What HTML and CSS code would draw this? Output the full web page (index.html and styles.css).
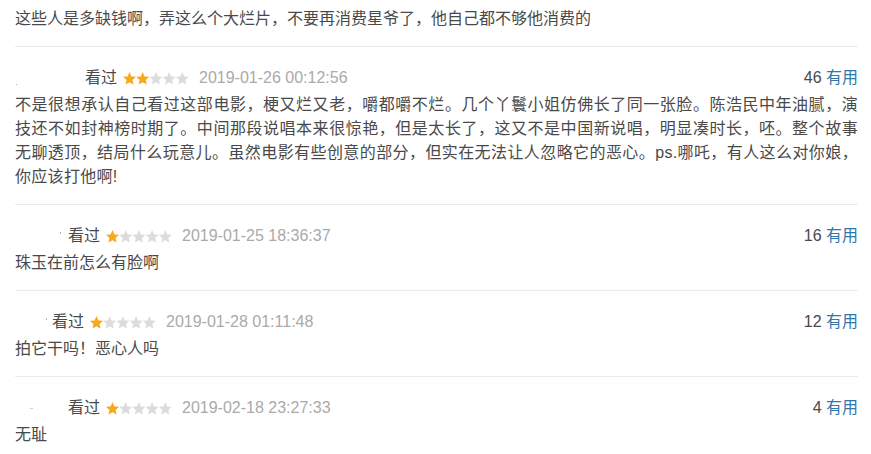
FILE: index.html
```html
<!DOCTYPE html>
<html lang="zh-CN">
<head>
<meta charset="utf-8">
<title>短评</title>
<link rel="stylesheet" href="styles.css">
</head>
<body>
<div class="list">
  <div class="item first">
    <p class="text">这些人是多缺钱啊，弄这么个大烂片，不要再消费星爷了，他自己都不够他消费的</p>
  </div>

  <div class="item">
    <div class="head">
      <span class="user u1"><i class="dot d1"></i></span>
      <span class="status">看过</span>
      <span class="stars">
        <svg viewBox="0 0 66 13" width="66" height="13"><use href="#s" x="0" class="on"/><use href="#s" x="13.2" class="on"/><use href="#s" x="26.4"/><use href="#s" x="39.6"/><use href="#s" x="52.8"/></svg>
      </span>
      <span class="time">2019-01-26 00:12:56</span>
      <span class="votes"><span class="num">46</span> <a class="useful">有用</a></span>
    </div>
    <p class="text text-long">不是很想承认自己看过这部电影，梗又烂又老，嚼都嚼不烂。几个丫鬟小姐仿佛长了同一张脸。陈浩民中年油腻，演技还不如封神榜时期了。中间那段说唱本来很惊艳，但是太长了，这又不是中国新说唱，明显凑时长，呸。整个故事无聊透顶，结局什么玩意儿。虽然电影有些创意的部分，但实在无法让人忽略它的恶心。ps.哪吒，有人这么对你娘，你应该打他啊!</p>
  </div>

  <div class="item">
    <div class="head">
      <span class="user u2"><i class="dot d2"></i></span>
      <span class="status">看过</span>
      <span class="stars">
        <svg viewBox="0 0 66 13" width="66" height="13"><use href="#s" x="0" class="on"/><use href="#s" x="13.2"/><use href="#s" x="26.4"/><use href="#s" x="39.6"/><use href="#s" x="52.8"/></svg>
      </span>
      <span class="time">2019-01-25 18:36:37</span>
      <span class="votes"><span class="num">16</span> <a class="useful">有用</a></span>
    </div>
    <p class="text">珠玉在前怎么有脸啊</p>
  </div>

  <div class="item">
    <div class="head">
      <span class="user u3"><i class="dot d3"></i></span>
      <span class="status">看过</span>
      <span class="stars">
        <svg viewBox="0 0 66 13" width="66" height="13"><use href="#s" x="0" class="on"/><use href="#s" x="13.2"/><use href="#s" x="26.4"/><use href="#s" x="39.6"/><use href="#s" x="52.8"/></svg>
      </span>
      <span class="time">2019-01-28 01:11:48</span>
      <span class="votes"><span class="num">12</span> <a class="useful">有用</a></span>
    </div>
    <p class="text">拍它干吗！恶心人吗</p>
  </div>

  <div class="item">
    <div class="head">
      <span class="user u4"><i class="dot d4"></i></span>
      <span class="status">看过</span>
      <span class="stars">
        <svg viewBox="0 0 66 13" width="66" height="13"><use href="#s" x="0" class="on"/><use href="#s" x="13.2"/><use href="#s" x="26.4"/><use href="#s" x="39.6"/><use href="#s" x="52.8"/></svg>
      </span>
      <span class="time">2019-02-18 23:27:33</span>
      <span class="votes"><span class="num">4</span> <a class="useful">有用</a></span>
    </div>
    <p class="text">无耻</p>
  </div>
</div>

<svg class="defs" width="0" height="0">
  <defs>
    <path id="s" d="M6.5 0.1 L8.38 4.41 L13.06 4.87 L9.54 7.99 L10.56 12.58 L6.5 10.2 L2.44 12.58 L3.46 7.99 L-0.06 4.87 L4.62 4.41 Z"/>
  </defs>
</svg>
</body>
</html>
```

FILE: styles.css
```css
html, body {
  margin: 0;
  padding: 0;
  background: #fff;
}

body {
  font-family: "Liberation Sans", "Noto Sans CJK SC", sans-serif;
  font-size: 16px;
  color: #494949;
}

.list {
  width: 843px;
  margin-left: 15px;
}

.item {
  padding: 19px 0 15px;
  border-top: 1px solid #ebebeb;
}

.item.first {
  padding-top: 7px;
  padding-bottom: 15px;
  border-top: none;
}

.text {
  margin: 3px 0 0;
  line-height: 24px;
  text-align: justify;
}

.text-long {
  letter-spacing: 0.3px;
}

.item.first .text {
  margin: 0;
}

.head {
  display: flex;
  align-items: center;
  height: 24px;
  line-height: 24px;
}

.user {
  display: block;
  position: relative;
  height: 24px;
  flex: none;
}

.u1 { width: 70px; }
.u2 { width: 53px; }
.u3 { width: 37px; }
.u4 { width: 53px; }

.dot {
  position: absolute;
  display: block;
  width: 1px;
  height: 1px;
  background: #9bb8d8;
}

.d1 { left: 1px; top: 18px; }
.d2 { left: 45px; top: 8px; height: 2px; }
.d3 { left: 31px; top: 8px; height: 2px; }
.d4 { left: 15px; top: 12px; width: 3px; background: #c9d3df; }

.status {
  color: #494949;
}

.stars {
  display: flex;
  margin-left: 6px;
}

.stars svg {
  display: block;
  overflow: visible;
  fill: #dcdcdc;
}

.stars .on {
  fill: #f7a81d;
}

.time {
  margin-left: 10px;
  color: #aaa;
}

.votes {
  margin-left: auto;
}

.num {
  color: #494949;
}

.useful {
  color: #3377aa;
  text-decoration: none;
}

.defs {
  position: absolute;
  width: 0;
  height: 0;
}
```
